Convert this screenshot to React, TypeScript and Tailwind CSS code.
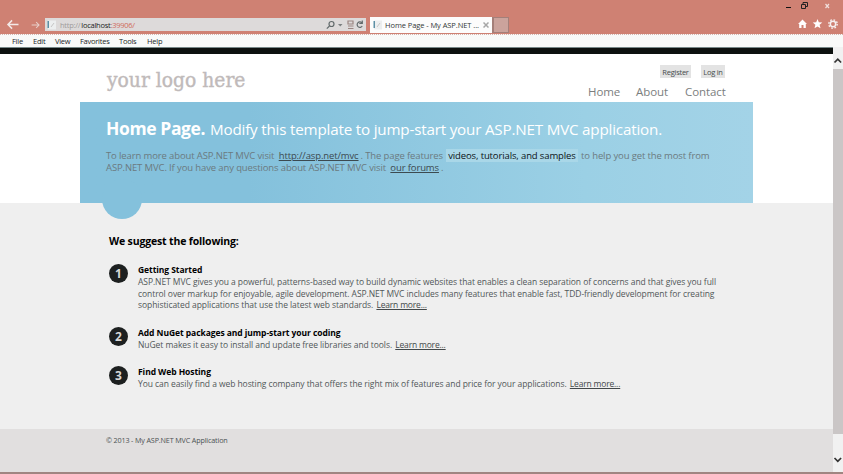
import React from "react";

const menus = [
  { label: "File", cls: "w-[21px]" },
  { label: "Edit", cls: "w-[22px]" },
  { label: "View", cls: "w-[25px]" },
  { label: "Favorites", cls: "w-[39px]" },
  { label: "Tools", cls: "w-[28px]" },
  { label: "Help", cls: "w-[20px]" },
];

function Arrow({ flip, className }: { flip?: boolean; className: string }) {
  return (
    <svg viewBox="0 0 14 12" className={className} fill="none" stroke="currentColor" strokeWidth="1.6">
      <path d={flip ? "M1 6h11M8 1.5 12.5 6 8 10.5" : "M13 6H2M6 1.5 1.5 6 6 10.5"} />
    </svg>
  );
}

function PageIcon() {
  return (
    <svg viewBox="0 0 10 10" className="h-[10px] w-[10px] shrink-0">
      <rect x="1" y="0.5" width="8" height="9" fill="#eceeef" />
      <rect x="0.5" y="1" width="1.5" height="7" fill="#5c8fa5" />
      <path d="M4 7 7 3" stroke="#c5c5c5" strokeWidth="1" />
    </svg>
  );
}

function TitleBar() {
  return (
    <header className="flex h-[34px] bg-[#cf8173]">
      <div className="flex w-[45px] items-center pt-[15px] pl-[6px] text-[#f4e9e7]">
        <Arrow className="h-[11px] w-[14px]" />
        <Arrow flip className="ml-[11px] h-[8px] w-[9px] text-[#e8cfca]" />
      </div>
      <div className="mt-[18px] flex h-[13px] w-[321px] items-center bg-[#dddada] pl-[2px]">
        <PageIcon />
        <span className="ml-[3px] text-[7.5px] leading-[12px] tracking-[-0.250px] whitespace-nowrap text-[#a09a9a]">
          http://<span className="ml-px text-[#1c1c1c]">localhost</span>
          <span className="text-[#d0695c]">:39906/</span>
        </span>
        <svg viewBox="0 0 40 12" className="ml-auto h-[12px] w-[40px]" fill="none" stroke="#626a6b" strokeWidth="1.2">
          <circle cx="5.5" cy="5" r="2.5" />
          <path d="M3.500 7 .8 9.600" />
          <path d="M12 5h4.500l-2.250 2.500z" fill="#7b7f80" stroke="none" />
          <path d="M22 2h5v3H22zM22 7h5.500M22 9.500h5.500" stroke="#9b8581" />
          <path d="M35.800 3.800A2.700 2.700 0 1 0 36.200 7M36.300 1.500v3h-3" />
        </svg>
      </div>
      <div className="mt-[17px] ml-[4px] flex h-[16px] w-[122px] items-center bg-[#fcfcfc] pl-[3px]">
        <PageIcon />
        <span className="ml-[2px] pt-px text-[7.500px] tracking-[-0.080px] whitespace-nowrap text-[#333838]">Home Page - My ASP.NET ...</span>
        <svg viewBox="0 0 6 6" className="ml-auto mr-[3px] h-[6px] w-[6px]" stroke="#a6a6a6" strokeWidth="1.5">
          <path d="m.5.5 5 5m0-5-5 5" />
        </svg>
      </div>
      <div className="mt-[17px] h-[16px] w-[17px] border border-l-2 border-[#a47f79] bg-[#cba39c]" />
      <div className="ml-auto flex w-[60px] flex-col">
        <svg viewBox="0 0 60 34" className="h-[34px] w-[60px]" fill="none">
          <path d="M3 7.500h5" stroke="#111" strokeWidth="1" />
          <path d="M18.500 4.500h4v4h-4zM20 4V2.500h4.500v4H23" stroke="#222" strokeWidth="1" />
          <path d="m42.500 4 3.500 4m0-4-3.500 4" stroke="#f1dfdc" strokeWidth="1.2" />
          <path d="m15 24 4.500-4.500L24 24h-1.200v4h-2.300v-3h-2v3h-2.300v-4z" fill="#fff" />
          <path d="m34.500 19 1.300 3.300 3.500.2-2.700 2.300.9 3.500-3-1.900-3 1.900.9-3.500-2.700-2.300 3.500-.2z" fill="#fff" />
          <circle cx="50" cy="24" r="2.700" stroke="#f6efee" strokeWidth="1.5" />
          <circle cx="50" cy="24" r="4.200" stroke="#f6efee" strokeWidth="1.400" strokeDasharray="1.65 1.65" />
        </svg>
      </div>
    </header>
  );
}

function MenuBar() {
  return (
    <nav className="flex h-[13px] items-center border-t border-dotted border-[#d5b5b0] bg-[#f9faf9] pl-[12px] text-[7.500px] tracking-[-0.250px] text-[#1c1f1f]">
      {menus.map((m) => (
        <span key={m.label} className={`${m.cls} whitespace-nowrap leading-[12px]`}>
          {m.label}
        </span>
      ))}
    </nav>
  );
}

function Hero() {
  return (
    <section className="relative ml-[80px] h-[101px] w-[673px] bg-linear-to-r from-[#84c1dc] from-25% via-[#9bd0e5] via-75% to-[#a3d3e7] pl-[26px]">
      <div className="absolute top-[77px] left-[22px] h-[40px] w-[40px] rounded-full bg-[#84c1dc]" />
      <h1 className="relative flex items-baseline pt-[14px] leading-[24px] whitespace-nowrap text-white">
        <span className="w-[104px] text-[17.500px] font-bold tracking-[-0.400px]">Home Page.</span>
        <span className="text-[15.200px] tracking-[-0.190px]">Modify this template to jump-start your ASP.NET MVC application.</span>
      </h1>
      <p className="relative mt-[8.500px] text-[9.500px] leading-[12.500px] tracking-[-0.125px] whitespace-nowrap text-[#6b7a80]">
        To learn more about ASP.NET MVC visit{" "}
        <a className="mx-[2px] text-[#3c4a50] underline">http://asp.net/mvc</a>. The page features{" "}
        <mark className="mx-px bg-[#a9d7e8] px-[2px] text-[#0c1418]">videos, tutorials, and samples</mark>
        {" "}to help you get the most from
        <br />
        ASP.NET MVC. If you have any questions about ASP.NET MVC visit{" "}
        <a className="mx-[2px] text-[#3c4a50] underline">our forums</a>.
      </p>
    </section>
  );
}

function Step({ n, title, className, children }: { n: number; title: string; className: string; children: React.ReactNode }) {
  return (
    <li className={`flex ${className}`}>
      <span className="flex h-[19px] w-[19px] shrink-0 items-center justify-center rounded-full bg-[#1d2020] text-[12px] font-bold text-[#d8d8d8]">
        {n}
      </span>
      <div className="ml-[10px] text-[8.500px] leading-[11.800px] tracking-[-0.065px] whitespace-nowrap text-[#515759]">
        <h3 className="font-bold text-black">{title}</h3>
        <p>{children}</p>
      </div>
    </li>
  );
}

function LearnMore() {
  return <a className="ml-px tracking-[-0.180px] text-[#43494b] underline">Learn more...</a>;
}

function Scrollbar() {
  return (
    <aside className="flex w-[10px] shrink-0 flex-col bg-[#f1f1f1]">
      <svg viewBox="0 0 10 22" className="h-[22px] w-[10px]" fill="none" stroke="#333" strokeWidth="1.700">
        <path d="m1.500 15.500 3.300-3.300 3.300 3.300" />
      </svg>
      <div className="h-[365px] bg-[#cac6c6]" />
      <svg viewBox="0 0 10 38" className="h-[38px] w-[10px]" fill="none" stroke="#333" strokeWidth="1.700">
        <path d="m1.500 24 3.300 3.300 3.300-3.300" />
      </svg>
    </aside>
  );
}

export default function App() {
  return (
    <div className="flex h-[474px] w-[843px] flex-col overflow-hidden bg-[#efefef] font-['Open_Sans','Noto_Sans',sans-serif]">
      <TitleBar />
      <MenuBar />
      <div className="flex h-[425px]">
        <main className="flex w-[833px] flex-col">
          <div className="h-[7px] border-t border-[#788] bg-[#0d110f]" />
          <div className="flex h-[48px] bg-white">
            <div className="mt-[13px] ml-[107px] w-[160px] origin-left scale-x-[.96] font-['DejaVu_Serif',serif] text-[19.500px] leading-[28px] whitespace-nowrap text-[#c0baba] [-webkit-text-stroke:0.4px_#c0baba]">
              your logo here
            </div>
            <div className="ml-auto flex w-[246px] flex-col">
              <div className="mt-[11px] ml-[73px] flex h-[13px] text-[7.500px] leading-[15px] tracking-[-0.250px] text-[#454c4d]">
                <span className="w-[31px] bg-[#e3e3e3] text-center">Register</span>
                <span className="ml-[10px] w-[24px] bg-[#e3e3e3] text-center">Log in</span>
              </div>
              <div className="mt-[6px] ml-px flex text-[11.500px] leading-[16px] tracking-[-0.080px] text-[#7b7e7e]">
                <span className="w-[48px]">Home</span>
                <span className="w-[49px]">About</span>
                <span>Contact</span>
              </div>
            </div>
          </div>
          <div className="h-[101px] bg-white">
            <Hero />
          </div>
          <section className="h-[226px] pl-[109px]">
            <h2 className="pt-[30px] text-[10.500px] leading-[16px] font-bold tracking-[-0.160px] whitespace-nowrap text-black">We suggest the following:</h2>
            <ol className="mt-[15px]">
              <Step n={1} title="Getting Started" className="h-[63px]">
                ASP.NET MVC gives you a powerful, patterns-based way to build dynamic websites that enables a clean separation of concerns and that gives you full
                <br />
                control over markup for enjoyable, agile development. ASP.NET MVC includes many features that enable fast, TDD-friendly development for creating
                <br />
                sophisticated applications that use the latest web standards. <LearnMore />
              </Step>
              <Step n={2} title="Add NuGet packages and jump-start your coding" className="h-[39px]">
                NuGet makes it easy to install and update free libraries and tools. <LearnMore />
              </Step>
              <Step n={3} title="Find Web Hosting" className="h-[39px]">
                You can easily find a web hosting company that offers the right mix of features and price for your applications. <LearnMore />
              </Step>
            </ol>
          </section>
          <footer className="h-[43px] bg-[#e1dfdf] pt-[5px] pl-[106px] text-[7.200px] leading-[12px] tracking-[-0.150px] text-[#4c5253]">
            © 2013 - My ASP.NET MVC Application
          </footer>
        </main>
        <Scrollbar />
      </div>
      <div className="h-[2px] bg-[#a08581]" />
    </div>
  );
}
